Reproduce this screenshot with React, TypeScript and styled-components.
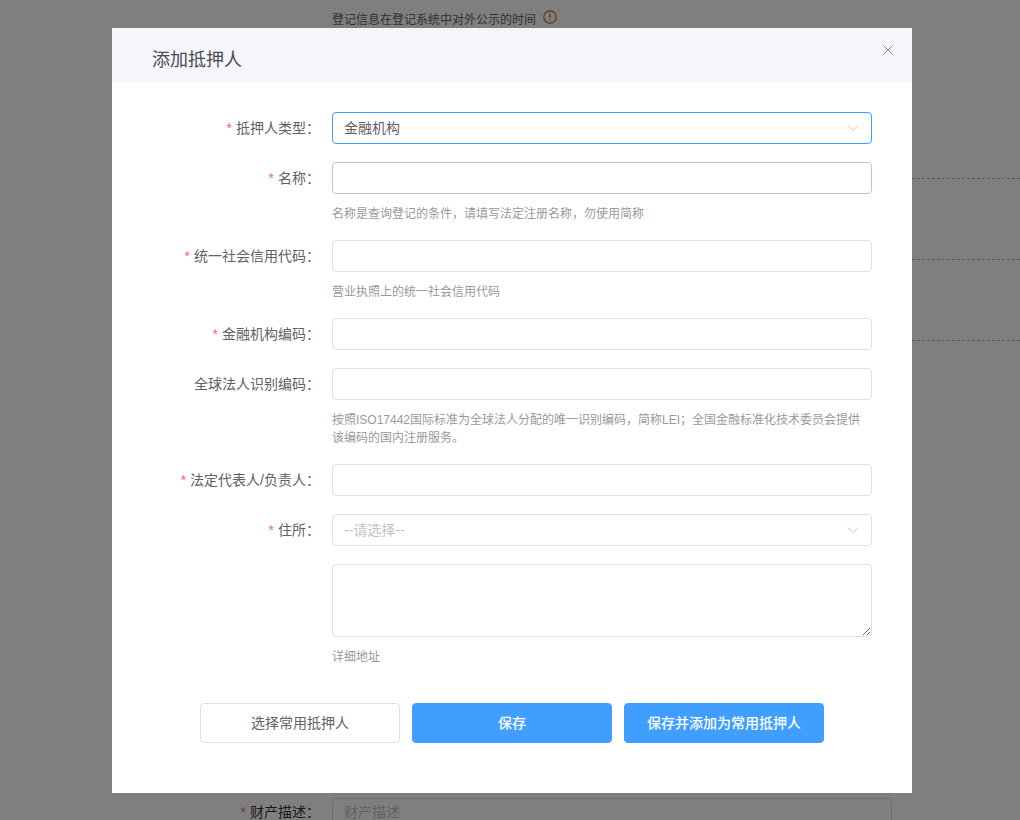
import React from "react";
import styled, { createGlobalStyle } from "styled-components";

const Global = createGlobalStyle`
  html, body { margin: 0; padding: 0; height: 100%; overflow: hidden; background: #fff; }
  body { font-family: "Liberation Sans", "Noto Sans CJK SC", sans-serif; }
  * { box-sizing: border-box; }
`;

const Page = styled.div`
  width: 1020px;
  height: 820px;
  overflow: hidden;
  background: #fff;
  padding-top: 10px;
`;
const Notice = styled.div`
  display: flex;
  align-items: flex-start;
  gap: 7px;
  margin-left: 332px;
  height: 18px;
  font-size: 12px;
  line-height: 20px;
  color: #606266;
`;
const Dashed = styled.div<{ $first?: boolean }>`
  border-top: 1px dashed #bbb;
  height: 81px;
  margin-left: 120px;
  margin-top: ${(p) => (p.$first ? "150px" : "0")};
`;
const BgRow = styled.div`
  display: flex;
  align-items: flex-start;
  margin-top: 377px;
  height: 32px;
`;
const BgLabel = styled.div`
  width: 320px;
  text-align: right;
  font-size: 14px;
  line-height: 28px;
  color: #303133;
`;
const BgInput = styled.div`
  margin-left: 12px;
  width: 560px;
  height: 32px;
  border: 1px solid #dcdfe6;
  border-radius: 4px;
  padding: 0 11px;
  line-height: 26px;
  font-size: 14px;
  color: #c0c4cc;
`;

const Overlay = styled.div`
  position: fixed;
  inset: 0;
  background: rgba(0, 0, 0, 0.5);
  padding-top: 28px;
`;
const Dialog = styled.div`
  width: 800px;
  height: 765px;
  margin-left: 112px;
  background: #fff;
  position: relative;
`;
const Header = styled.div`
  height: 54px;
  background: #f4f6fb;
  padding: 20px 40px 0;
  font-size: 18px;
  line-height: 24px;
  color: #494b50;
`;
const Close = styled.button`
  position: absolute;
  top: 16px;
  right: 18px;
  width: 12px;
  height: 12px;
  padding: 0;
  border: 0;
  background: none;
  color: #909399;
  display: flex;
`;
const Body = styled.div`
  padding: 30px 40px 0;
`;
const Row = styled.div`
  display: flex;
  margin-bottom: 18px;
`;
const Label = styled.label`
  width: 180px;
  padding-right: 12px;
  text-align: right;
  font-size: 14px;
  line-height: 32px;
  color: #606266;
  flex: none;
`;
const Star = styled.span`
  color: #f56c6c;
  margin-right: 4px;
`;
const Field = styled.div`
  width: 540px;
`;
const Input = styled.input<{ $hover?: boolean }>`
  display: block;
  width: 100%;
  height: 32px;
  border: 1px solid ${(p) => (p.$hover ? "#c0c4cc" : "#dcdfe6")};
  border-radius: 4px;
  background: #fff;
  outline: none;
  padding: 0 11px;
  font: inherit;
  font-size: 14px;
`;
const Select = styled.div<{ $focus?: boolean; $empty?: boolean }>`
  display: flex;
  align-items: center;
  justify-content: space-between;
  height: 32px;
  border: 1px solid ${(p) => (p.$focus ? "#409eff" : "#dcdfe6")};
  border-radius: 4px;
  padding: 0 12px 2px 11px;
  font-size: 14px;
  color: ${(p) => (p.$empty ? "#c0c4cc" : "#606266")};
`;
const Chevron = styled.svg`
  width: 12px;
  height: 12px;
  margin-top: 2px;
  color: #c0c4cc;
  flex: none;
`;
const Area = styled.textarea`
  display: block;
  width: 100%;
  height: 73px;
  border: 1px solid #dcdfe6;
  border-radius: 4px;
  padding: 5px 11px;
  outline: none;
  font: inherit;
  font-size: 14px;
  resize: vertical;
`;
const Hint = styled.div`
  padding-top: 11px;
  margin-bottom: -1px;
  font-size: 12px;
  line-height: 18px;
  color: #999;
`;
const Actions = styled.div`
  display: flex;
  justify-content: center;
  gap: 12px;
  margin-top: 38px;
`;
const Btn = styled.button<{ $primary?: boolean }>`
  width: 200px;
  height: 40px;
  padding: 0 0 2px;
  border-radius: 4px;
  border: 1px solid ${(p) => (p.$primary ? "#409eff" : "#dcdfe6")};
  background: ${(p) => (p.$primary ? "#409eff" : "#fff")};
  color: ${(p) => (p.$primary ? "#fff" : "#606266")};
  font: inherit;
  font-size: 14px;
  font-weight: ${(p) => (p.$primary ? 500 : 400)};
`;

const Arrow = () => (
  <Chevron viewBox="0 0 12 12" fill="none" stroke="currentColor" strokeWidth="1">
    <path d="M1 3.5 6 8.5 11 3.5" />
  </Chevron>
);

export default function App() {
  return (
    <>
      <Global />
      <Page>
        <Notice>
          <span>登记信息在登记系统中对外公示的时间</span>
          <svg width="14" height="14" viewBox="0 0 14 14" fill="none" stroke="#e6511f">
            <circle cx="7" cy="7" r="6.2" strokeWidth="1.2" />
            <path d="M7 3.4v4.4M7 9.4v1.2" strokeWidth="1.3" />
          </svg>
        </Notice>
        <Dashed $first />
        <Dashed />
        <Dashed />
        <BgRow>
          <BgLabel>
            <Star>*</Star>财产描述：
          </BgLabel>
          <BgInput>财产描述</BgInput>
        </BgRow>
      </Page>
      <Overlay>
        <Dialog>
          <Header>添加抵押人</Header>
          <Close aria-label="关闭">
            <svg width="12" height="12" viewBox="0 0 12 12" fill="none" stroke="currentColor" strokeWidth="1">
              <path d="M1 1 11 11M11 1 1 11" />
            </svg>
          </Close>
          <Body>
            <Row>
              <Label><Star>*</Star>抵押人类型：</Label>
              <Field>
                <Select $focus>金融机构<Arrow /></Select>
              </Field>
            </Row>
            <Row>
              <Label><Star>*</Star>名称：</Label>
              <Field>
                <Input $hover />
                <Hint>名称是查询登记的条件，请填写法定注册名称，勿使用简称</Hint>
              </Field>
            </Row>
            <Row>
              <Label><Star>*</Star>统一社会信用代码：</Label>
              <Field>
                <Input />
                <Hint>营业执照上的统一社会信用代码</Hint>
              </Field>
            </Row>
            <Row>
              <Label><Star>*</Star>金融机构编码：</Label>
              <Field><Input /></Field>
            </Row>
            <Row>
              <Label>全球法人识别编码：</Label>
              <Field>
                <Input />
                <Hint>按照ISO17442国际标准为全球法人分配的唯一识别编码，简称LEI；全国金融标准化技术委员会提供该编码的国内注册服务。</Hint>
              </Field>
            </Row>
            <Row>
              <Label><Star>*</Star>法定代表人/负责人：</Label>
              <Field><Input /></Field>
            </Row>
            <Row>
              <Label><Star>*</Star>住所：</Label>
              <Field>
                <Select $empty>--请选择--<Arrow /></Select>
              </Field>
            </Row>
            <Row>
              <Label />
              <Field>
                <Area />
                <Hint>详细地址</Hint>
              </Field>
            </Row>
            <Actions>
              <Btn>选择常用抵押人</Btn>
              <Btn $primary>保存</Btn>
              <Btn $primary>保存并添加为常用抵押人</Btn>
            </Actions>
          </Body>
        </Dialog>
      </Overlay>
    </>
  );
}
